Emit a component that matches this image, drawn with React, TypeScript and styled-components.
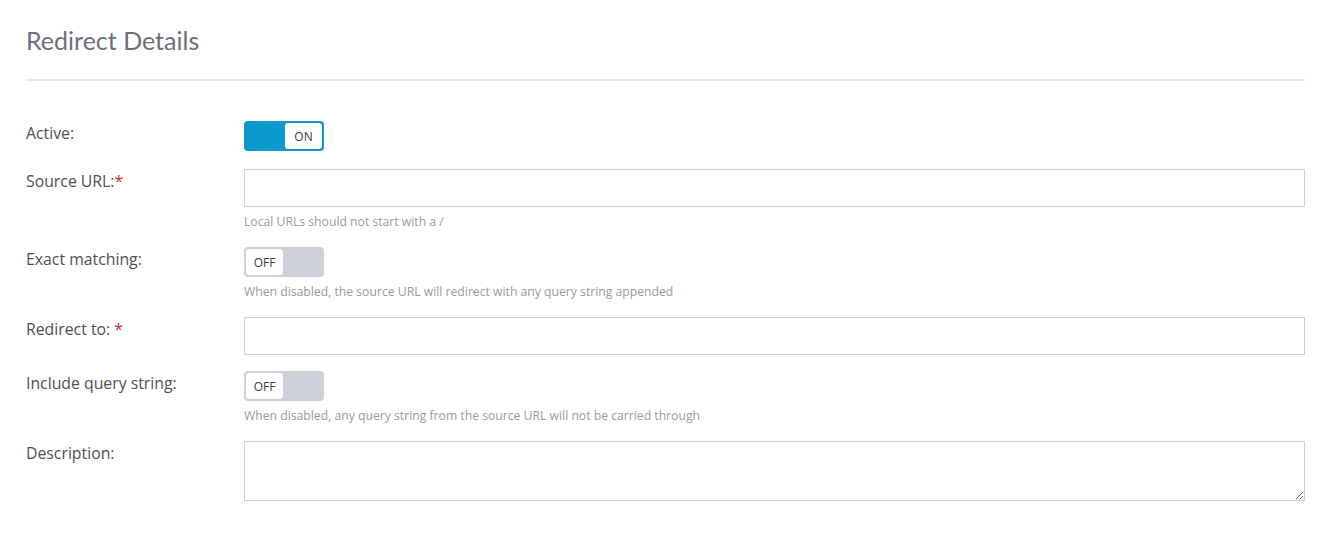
import React from "react";
import styled, { createGlobalStyle } from "styled-components";

const GlobalStyle = createGlobalStyle`
  html, body {
    margin: 0;
    padding: 0;
    background: #fff;
  }
  body {
    font-family: "Open Sans", "Noto Sans", Arial, sans-serif;
    color: #555;
  }
`;

const Page = styled.div`
  padding: 24px 25px 30px 26px;
`;

const Title = styled.h1`
  margin: 0;
  font-family: Lato, "Open Sans", sans-serif;
  font-size: 25px;
  line-height: 32px;
  font-weight: 400;
  color: #6b7179;
  padding-bottom: 23px;
  border-bottom: 2px solid #e7e7e7;
`;

const Form = styled.div`
  padding-top: 40px;
`;

const Row = styled.div<{ $gap?: number }>`
  display: grid;
  grid-template-columns: 218px 1fr;
  margin-bottom: ${(p) => p.$gap ?? 17}px;
`;

const Label = styled.div`
  font-size: 15.8px;
  line-height: 24px;
  color: #505050;
`;

const Required = styled.span`
  color: #c9302c;
`;

const Field = styled.div`
  display: flex;
  flex-direction: column;
  align-items: flex-start;
`;

const TextInput = styled.input`
  box-sizing: border-box;
  width: 100%;
  height: 38px;
  border: 1px solid #cfcfcf;
  border-radius: 0;
  padding: 6px 10px;
  font: inherit;
  outline: none;
`;

const TextArea = styled.textarea`
  box-sizing: border-box;
  width: 100%;
  height: 60px;
  border: 1px solid #cfcfcf;
  border-radius: 0;
  padding: 6px 10px;
  font: inherit;
  outline: none;
  display: block;
`;

const Help = styled.div`
  margin-top: 6px;
  font-size: 12.2px;
  line-height: 17px;
  color: #9a9a9a;
`;

const Toggle = styled.div<{ $on: boolean }>`
  box-sizing: border-box;
  width: 80px;
  height: 30px;
  border-radius: 4px;
  display: flex;
  flex-direction: ${(p) => (p.$on ? "row" : "row-reverse")};
  background: ${(p) => (p.$on ? "#0a9acb" : "#cdd1d8")};
  border: 2px solid ${(p) => (p.$on ? "#0a9acb" : "#cdd1d8")};
  overflow: hidden;
`;

const ToggleFill = styled.div`
  flex: 1;
`;

const ToggleKnob = styled.div`
  width: 37px;
  background: #fff;
  border-radius: 3px;
  display: flex;
  align-items: center;
  justify-content: center;
  font-size: 12px;
  color: #3a3a3a;
`;

function Switch({ on }: { on: boolean }) {
  return (
    <Toggle $on={on}>
      <ToggleFill />
      <ToggleKnob>{on ? "ON" : "OFF"}</ToggleKnob>
    </Toggle>
  );
}

export default function App() {
  return (
    <Page>
      <GlobalStyle />
      <Title>Redirect Details</Title>
      <Form>
        <Row $gap={18}>
          <Label>Active:</Label>
          <Field>
            <Switch on />
          </Field>
        </Row>
        <Row>
          <Label>
            Source URL:<Required>*</Required>
          </Label>
          <Field>
            <TextInput />
            <Help>Local URLs should not start with a /</Help>
          </Field>
        </Row>
        <Row>
          <Label>Exact matching:</Label>
          <Field>
            <Switch on={false} />
            <Help>When disabled, the source URL will redirect with any query string appended</Help>
          </Field>
        </Row>
        <Row $gap={16}>
          <Label>
            Redirect to: <Required>*</Required>
          </Label>
          <Field>
            <TextInput />
          </Field>
        </Row>
        <Row>
          <Label>Include query string:</Label>
          <Field>
            <Switch on={false} />
            <Help>When disabled, any query string from the source URL will not be carried through</Help>
          </Field>
        </Row>
        <Row>
          <Label>Description:</Label>
          <Field>
            <TextArea />
          </Field>
        </Row>
      </Form>
    </Page>
  );
}
